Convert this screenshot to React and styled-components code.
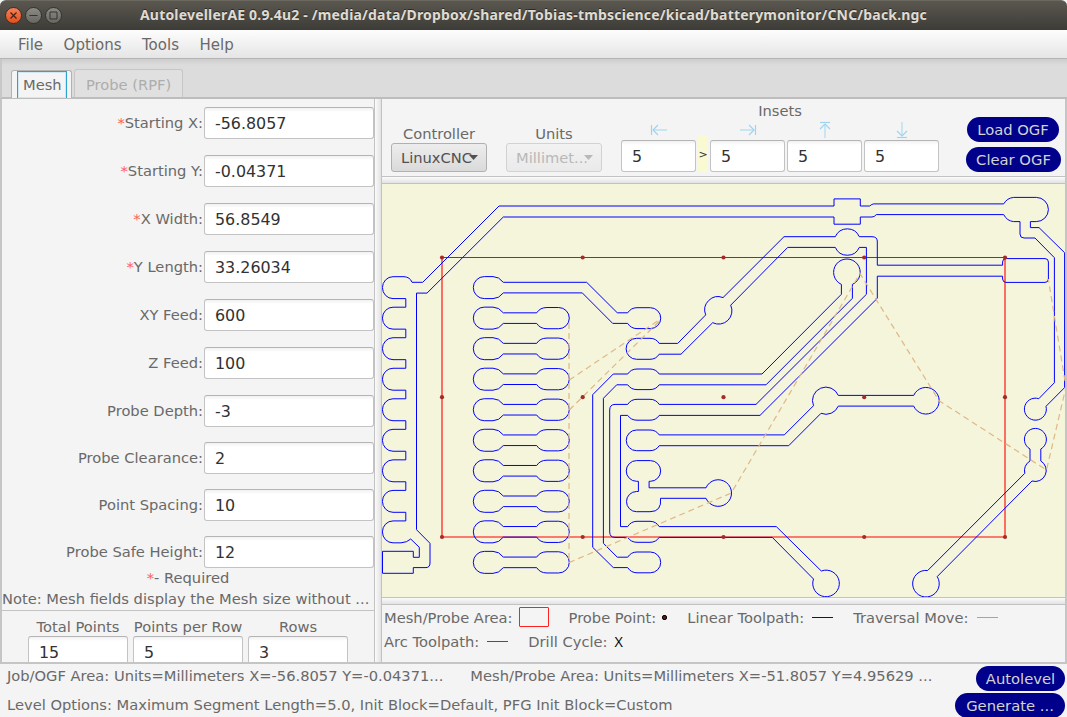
import React from "react";
import styled, { createGlobalStyle, css } from "styled-components";

const Global = createGlobalStyle`
  * { box-sizing: border-box; }
  body { margin: 0; overflow: hidden; background: #f4f4f4; }
`;

const Window = styled.div`
  width: 1067px;
  height: 717px;
  display: flex;
  flex-direction: column;
  overflow: hidden;
  background: #f4f4f4;
  color: #696969;
  font-family: "DejaVu Sans", sans-serif;
  font-size: 14.68px;
  line-height: 20px;
  white-space: nowrap;
`;

const TitleBar = styled.header`
  display: flex;
  align-items: center;
  flex: none;
  height: 30px;
  padding: 0 0 1px 5px;
  gap: 3px;
  border-radius: 6px 6px 0 0;
  border-top: 1px solid #6a685f;
  background: linear-gradient(#5a574f, #3d3c37);
`;

const WindowButton = styled.span`
  display: flex;
  width: 17px;
  height: 17px;
  border-radius: 50%;
  border: 1px solid #34332f;
  background: ${(p) => (p.$close ? "linear-gradient(#f58058, #e34f1b)" : "linear-gradient(#8b8a84, #686761)")};
`;

const Title = styled.h1`
  margin: 0 0 0 75px;
  font: 700 14px/20px "Noto Sans", "Open Sans", sans-serif;
  letter-spacing: 0.185px;
  color: #dfdbd2;
  text-shadow: 0 -1px 0 #2c2b27;
`;

const MenuBar = styled.nav`
  display: flex;
  flex: none;
  height: 29px;
  padding: 5px 18px 0;
  gap: 20.5px;
  font-size: 15px;
  border-bottom: 1px solid #b5b5b5;
  background: linear-gradient(#fdfdfd, #e5e5e5);
`;

const TabStrip = styled.div`
  display: flex;
  flex: none;
  align-items: flex-end;
  height: 40px;
  padding-left: 11px;
  gap: 2px;
  border-bottom: 2px solid #bdbdbd;
  border-left: 2px solid #c8c8c8;
  background: linear-gradient(#cdcdcd, #dcdcdc 6px, #dcdcdc);
`;

const Tab = styled.div`
  display: flex;
  height: 28px;
  margin-bottom: ${(p) => (p.$active ? -1 : 0)}px;
  border: 1px solid ${(p) => (p.$active ? "#b2b2b2" : "#c6c6c6")};
  border-bottom: 0;
  border-radius: 3px 3px 0 0;
  background: ${(p) => (p.$active ? "#f4f4f4" : "#e0e0e0")};
  color: ${(p) => (p.$active ? "#696969" : "#adadad")};
  margin-left: ${(p) => (p.$active ? -2 : 0)}px;
  padding: ${(p) => (p.$active ? "0 4px 0 5px" : "5px 11px 0")};
`;

const TabFocus = styled.span`
  width: 50px;
  padding: 3px 0 0 5px;
  border: 1px solid #2aa5d2;
  border-bottom: 0;
  box-shadow: inset 0 0 0 1px #cfe8f1;
`;

const Workspace = styled.main`
  display: flex;
  flex: none;
  height: 565px;
  border: 2px solid #c5c5c5;
  border-top: 0;
`;

const MeshPanel = styled.section`
  width: 372px;
  overflow: hidden;
`;

const VDivider = styled.div`
  width: 8px;
  border: 1px solid #c2c2c2;
  border-width: 0 1px;
  background: linear-gradient(90deg, #fbfbfb, #e2e2e2);
`;

const HDivider = styled.div`
  flex: none;
  height: 8px;
  border: 1px solid #c2c2c2;
  border-width: 1px 0;
  background: linear-gradient(#fbfbfb, #e2e2e2);
`;

const Fields = styled.div`
  display: flex;
  flex-direction: column;
  padding-top: 8px;
`;

const Field = styled.label`
  display: flex;
  align-items: center;
  justify-content: flex-end;
  gap: 1px;
  height: 32px;
  margin-bottom: ${(p) => p.$gap}px;
`;

const Star = styled.span`
  color: #ff6060;
`;

const Input = styled.input`
  width: ${(p) => p.$w}px;
  height: 32px;
  flex: none;
  padding: 0 10px;
  border: 1px solid #c3c3c3;
  border-top-color: #b4b4b4;
  border-radius: 3px;
  outline: 0;
  background: linear-gradient(#f1f1f1, #fff 4px);
  color: #323232;
  font: 15.9px "DejaVu Sans", sans-serif;
`;

const Required = styled.div`
  text-align: center;
`;

const Note = styled.div`
  margin-top: 1px;
  height: 22px;
  border-bottom: 1px solid #c3c3c3;
`;

const Totals = styled.div`
  display: flex;
  justify-content: center;
  gap: 5px;
  padding-top: 6px;
  line-height: 19px;
`;

const Stack = styled.div`
  display: flex;
  flex-direction: column;
  align-items: center;
`;

const ViewPanel = styled.section`
  display: flex;
  flex-direction: column;
  flex: 1;
  min-width: 0;
`;

const Toolbar = styled.div`
  display: flex;
  align-items: flex-end;
  flex: none;
  height: 77px;
  padding: 0 4px 4px 9px;
`;

const Choice = styled(Stack)`
  margin-right: 19px;
  line-height: 18px;
`;

const Select = styled.button`
  display: flex;
  align-items: center;
  width: 96px;
  height: 29px;
  padding: 0 0 0 9px;
  border: 1px solid #b0b0b0;
  border-radius: 3px;
  background: linear-gradient(#ededed, #dadada);
  color: #515151;
  font: inherit;
  ${(p) => p.$off && css`
    border-color: #d2d2d2;
    background: linear-gradient(#f2f2f2, #eaeaea);
    color: #b8b8b8;
  `}
  svg { flex: none; margin-left: ${(p) => (p.$off ? -4 : -3)}px; }
`;

const Insets = styled(Stack)`
  width: 318px;
`;

const InsetRow = styled.div`
  display: flex;
  align-items: flex-end;
  gap: 2px;
`;

const InsetCell = styled(Stack)`
  gap: 1px;
`;

const InsetSwap = styled.span`
  width: 10px;
  height: 37px;
  background: #fafad2;
  color: #333;
  font-size: 11px;
  line-height: 39px;
  text-align: center;
`;

const FileActions = styled(Stack)`
  margin-left: 27px;
  gap: 5px;
`;

const Pill = styled.button`
  width: ${(p) => p.$w}px;
  height: 25px;
  flex: none;
  margin: 0 ${(p) => p.$shift || 0}px 0 0;
  padding: 0;
  border: 0;
  border-radius: 13px;
  background: #00008b;
  color: #d3d3d3;
  font: 14.75px/25px "DejaVu Sans", sans-serif;
`;

const Plot = styled.svg`
  display: block;
  flex: none;
  background: #f5f5dc;
`;

const Legend = styled.div`
  flex: 1;
  padding: 1px 2px;
`;

const LegendRow = styled.div`
  display: flex;
  align-items: center;
  height: 24px;
`;

const LegendItem = styled.span`
  display: flex;
  align-items: center;
  margin-right: ${(p) => p.$after}px;
`;

const AreaKey = styled.i`
  width: 30px;
  height: 20px;
  margin: -2px 0 0 6px;
  border: 1px solid #ff2020;
  border-radius: 1px;
`;

const PointKey = styled.i`
  width: 5px;
  height: 5px;
  margin: -2px 0 0 6px;
  border: 1px solid #000;
  border-radius: 2px;
  background: #5a1a1a;
`;

const LineKey = styled.i`
  width: 21px;
  height: 1px;
  margin: -1px 0 0 8px;
  background: ${(p) => p.$color};
`;

const DrillKey = styled.span`
  margin: -2px 0 0 7px;
  color: #000;
  font: 14.5px "Open Sans", sans-serif;
`;

const StatusBar = styled.footer`
  display: flex;
  justify-content: space-between;
  flex: 1;
  padding: 2px 2px 0 7px;
`;

const StatusText = styled.div`
  display: flex;
  flex-direction: column;
  gap: 9px;
`;

const StatusLine = styled.div`
  display: flex;
  gap: 27px;
`;

const StatusActions = styled.div`
  display: flex;
  flex-direction: column;
  align-items: flex-end;
  gap: 2px;
`;

const mesh = [
  ["Starting X:", "-56.8057", true, 16],
  ["Starting Y:", "-0.04371", true, 16],
  ["X Width:", "56.8549", true, 16],
  ["Y Length:", "33.26034", true, 16],
  ["XY Feed:", "600", false, 16],
  ["Z Feed:", "100", false, 16],
  ["Probe Depth:", "-3", false, 15],
  ["Probe Clearance:", "2", false, 15],
  ["Point Spacing:", "10", false, 15],
  ["Probe Safe Height:", "12", false, 0],
];

const totals = [
  ["Total Points", "15", 100],
  ["Points per Row", "5", 110],
  ["Rows", "3", 100],
];

function Arrow({ turn }) {
  return (
    <svg width="18" height="18" viewBox="0 0 18 18" fill="none" stroke="#9fd3ee">
      <g transform={`rotate(${turn} 9 9)`}>
        <path d="M1.5 4v10" strokeWidth="1.2" />
        <path d="M3 9h14" strokeWidth="1.6" stroke="#bfe2f2" />
        <path d="M8 4L3 9l5 5" strokeWidth="1.2" />
      </g>
    </svg>
  );
}

function Caret({ color }) {
  return (
    <svg width="9" height="5" viewBox="0 0 9 5">
      <path d="M0 0h9L4.5 5z" fill={color} />
    </svg>
  );
}

const rowY = (k) => 287.6 + 30.53 * k;

// Edge connector on the left border of the board, with the trace that runs up to the top right.
let edge = "M422.7 282.3H412Q410 277 404 276.7H393";
for (let k = 0; k < 9; k++) {
  const y = rowY(k);
  edge += `A10.5 10.9 0 0 0 393 ${y + 11}`;
  edge += k < 8 ? `H405.8V${y + 19.6}H393` : "H401Q407 542.5 410.7 539";
}
edge +=
  "L419.3 547.3V557.3H413.3V551.3H382.5V573.3H413.3V567.6H426Q430 567.5 430 563V543.3L416.5 529.7V293.1H427L503.3 217H834V224.2H860.3V217H872Q874.5 217 876.3 214.6H1003.7Q1007 221 1013.7 221.6H1020V234Q1020 238 1024 238H1035L1054.4 257.7V382.7L1038.8 398.7A11 11 0 1 0 1046 406.3L1064.6 387.6V252.7L1039 227.6H1030.4V221.6H1036.3A12.1 12.1 0 0 0 1036.3 197.4H1013.7Q1007 198 1003.7 203.9H873.7Q872 204 869.7 206H860.3V198.9H834V206H499Z";

const leftPad = (y) => `M503.3 ${y - 5.3}Q499 ${y - 11} 493 ${y - 11}H484.3A11 11 0 0 0 484.3 ${y + 11}H493Q499 ${y + 11} 503.3 ${y + 5.3}`;
const rightPad = (y) => `H536.7Q540 ${y + 10.6} 547 ${y + 10.6}H558.7A10.6 10.6 0 0 0 558.7 ${y - 10.6}H547Q540 ${y - 10.6} 536.7 ${y - 5.3}H503.3`;
const dumbbells = Array.from({ length: 9 }, (_, i) => leftPad(rowY(i + 1)) + rightPad(rowY(i + 1))).join("");

const tracks = [
  edge,
  dumbbells,
  `${leftPad(rowY(0))}H582.3L612.7 323.4H627.7Q631 328.6 637 328.6H650.3A10.4 10.4 0 0 0 650.3 307.7H637Q631 307.7 627.7 312.8H617.3L586.7 282.3H503.3`,
  "M677.7 343.4H659.2Q656 338.3 650 338.3H636.6A10.5 10.5 0 0 0 636.6 359.3H650Q656 359.3 659.2 354.2H681L712.7 322.7A13.3 13.3 0 0 0 730.7 305.2L787.7 247.4H835.3A13.1 13.1 0 0 0 859.3 247.4H866.4V294.3L756 404.4H659.2Q656 399.3 650 399.3H637Q631 399.3 627.7 404.4H615Q609.7 404.5 609.7 410V532Q609.7 537.4 615 537.4H627.7Q631 542.3 637 542.3H650Q656 542.3 659.2 537.4H772.3L813.5 579A13.3 13.3 0 1 0 821.3 571L776.3 526.6H659.2Q656 521.3 650 521.3H637Q631 521.3 627.7 526.6H620.5V415.4H627.7Q631 420.2 637 420.2H650Q656 420.2 659.2 415.4H760L877.3 298.3V276.2H1002.6V279Q1003 282.4 1006 282.4H1045Q1048.4 282.4 1048.4 279V262Q1048.4 258.6 1045 258.6H1006Q1002.6 258.6 1002.6 262V265.2H877.3V241Q877 236.7 872 236.7H859.3A13.1 13.1 0 0 0 835.3 236.7H784L723 297.6A13.3 13.3 0 0 0 705.7 314.9Z",
  "M613.3 374H627.7Q631 369 637 369H650Q656 369 659.2 374H762L841.4 294.3V284.4A13.3 13.3 0 1 1 852.4 284.4V298.3L766 384.8H659.2Q656 389.6 650 389.6H637Q631 389.6 627.7 384.8H616.7L603.4 398.3V543.3L617.3 557.2H627.7Q631 552 637 552H650.3A10.4 10.4 0 0 1 650.3 572.8H637Q631 572.8 627.7 567.6H613.3L592.7 547.3V394.7Z",
  "M659.2 434.9H784.3L813.5 405.7A13.3 13.3 0 0 1 838.3 395.4H913.7A13.3 13.3 0 1 1 913.7 406.1H838.3A13.3 13.3 0 0 1 821 413.3L788.7 445.7H659.2Q656 450.7 650 450.7H636.6A10.3 10.3 0 0 1 636.6 430H650Q656 430 659.2 434.9",
  "M638.4 481.3H636.6A10.3 10.3 0 0 1 636.6 460.6H650.3A10.3 10.3 0 0 1 650.3 481.3H649.1V487.8H706A13.3 13.3 0 1 1 706 498.3H660.5Q662 511.7 650 511.7H636.6A10.1 10.1 0 0 1 636.6 491.5H638.4Z",
  "M1030 449A11 11 0 1 1 1040.8 449V461A11 11 0 0 1 1032 481L937.2 576.6A13.3 13.3 0 1 1 927.7 570.5L1024.8 473.3A11 11 0 0 1 1030 461Z",
];

const moves =
  "M569 323V562M569.3 380L660.5 319M569.3 410L660.5 320M569 562.6L731.3 493L860 273.5L939 400.7L1046.5 470L1066 387L1048.3 279";

function Board() {
  return (
    <Plot width="683" height="413" viewBox="382 184 683 413" fill="none">
      <path d="M442 257.5H1005V537H442z" stroke="#ff0000" strokeWidth="1.1" />
      <path d={tracks.join("")} stroke="#0000ff" strokeWidth="1" />
      <path d={moves} stroke="#deb887" strokeWidth="1.2" strokeDasharray="6 4" />
      <g fill="#a52a2a">
        {[257.5, 397.2, 537].map((y) =>
          [442, 582.7, 723.5, 864.2, 1005].map((x) => <circle key={`${x}-${y}`} cx={x} cy={y} r="2.1" />)
        )}
      </g>
    </Plot>
  );
}

function Inset({ turn }) {
  return (
    <InsetCell>
      <Arrow turn={turn} />
      <Input $w={75} defaultValue="5" />
    </InsetCell>
  );
}

export default function App() {
  return (
    <Window>
      <Global />
      <TitleBar>
        <WindowButton $close>
          <svg width="15" height="15" stroke="#4a2010" strokeWidth="1.2"><path d="M4.5 4.5l6 6M10.5 4.5l-6 6" /></svg>
        </WindowButton>
        <WindowButton>
          <svg width="15" height="15" stroke="#35342f"><path d="M3.5 7.5h8" /></svg>
        </WindowButton>
        <WindowButton>
          <svg width="15" height="15" stroke="#35342f" fill="none"><path d="M4 4h7v7h-7z" /></svg>
        </WindowButton>
        <Title>AutolevellerAE 0.9.4u2 - /media/data/Dropbox/shared/Tobias-tmbscience/kicad/batterymonitor/CNC/back.ngc</Title>
      </TitleBar>
      <MenuBar>
        <span>File</span>
        <span>Options</span>
        <span>Tools</span>
        <span>Help</span>
      </MenuBar>
      <TabStrip>
        <Tab $active><TabFocus>Mesh</TabFocus></Tab>
        <Tab>Probe (RPF)</Tab>
      </TabStrip>
      <Workspace>
        <MeshPanel>
          <Fields>
            {mesh.map(([label, value, required, gap]) => (
              <Field key={label} $gap={gap}>
                <span>{required && <Star>*</Star>}{label}</span>
                <Input $w={170} defaultValue={value} />
              </Field>
            ))}
          </Fields>
          <Required><Star>*</Star>- Required</Required>
          <Note>Note: Mesh fields display the Mesh size without ...</Note>
          <Totals>
            {totals.map(([label, value, w]) => (
              <Stack key={label}>
                {label}
                <Input $w={w} defaultValue={value} />
              </Stack>
            ))}
          </Totals>
        </MeshPanel>
        <VDivider />
        <ViewPanel>
          <Toolbar>
            <Choice>
              Controller
              <Select>LinuxCNC<Caret color="#515151" /></Select>
            </Choice>
            <Choice>
              Units
              <Select $off>Millimet...<Caret color="#b8b8b8" /></Select>
            </Choice>
            <Insets>
              Insets
              <InsetRow>
                <Inset turn={0} />
                <InsetSwap>&gt;</InsetSwap>
                <Inset turn={180} />
                <Inset turn={90} />
                <Inset turn={270} />
              </InsetRow>
            </Insets>
            <FileActions>
              <Pill $w={92} $shift={1}>Load OGF</Pill>
              <Pill $w={95}>Clear OGF</Pill>
            </FileActions>
          </Toolbar>
          <HDivider />
          <Board />
          <HDivider />
          <Legend>
            <LegendRow>
              <LegendItem $after={20}>Mesh/Probe Area:<AreaKey /></LegendItem>
              <LegendItem $after={20}>Probe Point:<PointKey /></LegendItem>
              <LegendItem $after={20}>Linear Toolpath:<LineKey $color="#0000e0" /></LegendItem>
              <LegendItem $after={0}>Traversal Move:<LineKey $color="#dc8c8c" /></LegendItem>
            </LegendRow>
            <LegendRow>
              <LegendItem $after={20}>Arc Toolpath:<LineKey $color="#108010" /></LegendItem>
              <LegendItem $after={0}>Drill Cycle:<DrillKey>X</DrillKey></LegendItem>
            </LegendRow>
          </Legend>
        </ViewPanel>
      </Workspace>
      <StatusBar>
        <StatusText>
          <StatusLine>
            <span>Job/OGF Area: Units=Millimeters X=-56.8057 Y=-0.04371...</span>
            <span>Mesh/Probe Area: Units=Millimeters X=-51.8057 Y=4.95629 ...</span>
          </StatusLine>
          <span>Level Options: Maximum Segment Length=5.0, Init Block=Default, PFG Init Block=Custom</span>
        </StatusText>
        <StatusActions>
          <Pill $w={89}>Autolevel</Pill>
          <Pill $w={110}>Generate ...</Pill>
        </StatusActions>
      </StatusBar>
    </Window>
  );
}
